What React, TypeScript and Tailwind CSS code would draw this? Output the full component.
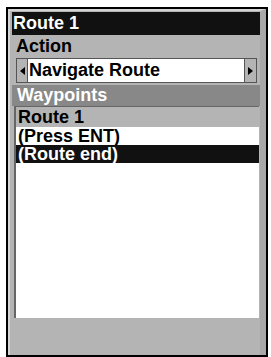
import React from "react";

export default function App() {
  const font = { fontFamily: '"Liberation Sans", Arial, sans-serif' };
  return (
    <div className="w-[271px] h-[357px] bg-white pt-[7px] pl-[6px]" style={font}>
      <div className="w-[262px] h-[350px] border-2 border-black bg-[#b4b4b4] flex flex-col">
        <div className="flex-1 flex flex-col border-l-2 border-t-2 border-[#d4d4d4] border-r-[6px] border-r-[#a8a8a8] pl-[2px] pr-[0px] pt-[1px]">
          <div className="h-[23px] bg-[#111] text-white font-bold text-[18px] leading-[23px] pl-[1px] mr-[0px]">
            Route 1
          </div>
          <div className="h-[23px] text-black font-bold text-[18px] leading-[23px] pl-[4px]">Action</div>
          <div className="ml-[4px] mr-[3px] h-[25px] bg-white border border-[#555] flex items-stretch">
            <div className="w-[11px] bg-[#b4b4b4] border-r border-[#555] flex items-center justify-center">
              <div className="w-0 h-0 border-y-[4px] border-y-transparent border-r-[5px] border-r-black" />
            </div>
            <div className="flex-1 font-bold text-[18px] leading-[23px] pl-[1px] text-black">Navigate Route</div>
            <div className="w-[12px] bg-[#b4b4b4] border-l border-[#555] flex items-center justify-center">
              <div className="w-0 h-0 border-y-[4px] border-y-transparent border-l-[5px] border-l-black" />
            </div>
          </div>
          <div className="mt-[2px] h-[21px] bg-[#888] text-white font-bold text-[18px] leading-[21px] pl-[5px] mr-[0px]">
            Waypoints
          </div>
          <div className="ml-[2px] mr-[1px] h-[212px] bg-white border-l-2 border-t border-[#666] flex flex-col">
            <div className="h-[20px] bg-[#b4b4b4] text-black font-bold text-[18px] leading-[20px] pl-[2px]">Route 1</div>
            <div className="h-[18px] bg-white text-black font-bold text-[18px] leading-[18px] pl-[2px]">(Press ENT)</div>
            <div className="h-[18px] bg-[#111] text-white font-bold text-[18px] leading-[18px] pl-[2px]">(Route end)</div>
          </div>
        </div>
      </div>
    </div>
  );
}
